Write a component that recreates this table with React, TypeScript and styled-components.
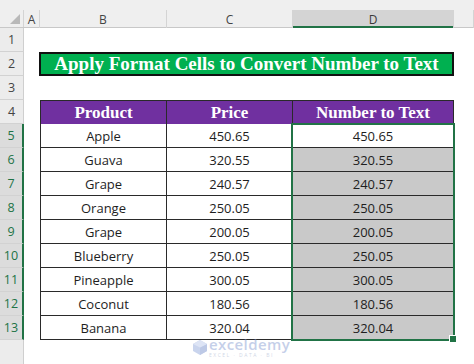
import { Fragment } from "react";
import styled, { createGlobalStyle } from "styled-components";

const GlobalStyle = createGlobalStyle`
  html, body {
    margin: 0;
    padding: 0;
    background: #ffffff;
  }
  body {
    width: 474px;
    height: 364px;
    overflow: hidden;
  }
`;

const SELECT_GREEN = "#217346";
const COLS = "16px 127px 126px 161px 1fr";

const Page = styled.div`
  position: relative;
  width: 474px;
  height: 364px;
  display: flex;
  flex-direction: column;
  font-family: "Open Sans", "Liberation Sans", sans-serif;
  overflow: hidden;
`;

const ColumnBar = styled.div`
  display: grid;
  grid-template-columns: 24px ${COLS};
  height: 28px;
  padding-top: 10px;
  box-sizing: border-box;
  background: #efefef;
  border-bottom: 1px solid #c8c8c8;
`;

const Corner = styled.div`
  position: relative;
  border-right: 1px solid #d4d4d4;
  &:after {
    content: "";
    position: absolute;
    right: 3px;
    bottom: 3px;
    border-style: solid;
    border-width: 0 0 10px 10px;
    border-color: transparent transparent #b9b9b9 transparent;
  }
`;

const ColHead = styled.div<{ $selected?: boolean }>`
  display: flex;
  align-items: center;
  justify-content: center;
  font-size: 12px;
  color: ${({ $selected }) => ($selected ? "#3a3a3a" : "#444")};
  background: ${({ $selected }) => ($selected ? "#d4d4d4" : "transparent")};
  border-right: 1px solid #d4d4d4;
  box-shadow: ${({ $selected }) =>
    $selected ? `inset 0 -2px 0 ${SELECT_GREEN}` : "none"};
  margin-bottom: -1px;
`;

const Body = styled.div`
  display: flex;
  flex: 1;
`;

const RowHeads = styled.div`
  width: 24px;
  display: flex;
  flex-direction: column;
  flex-shrink: 0;
`;

const RowHead = styled.div<{ $selected?: boolean }>`
  height: 24px;
  box-sizing: border-box;
  display: flex;
  align-items: center;
  justify-content: center;
  font-size: 12.5px;
  color: ${({ $selected }) => ($selected ? SELECT_GREEN : "#444")};
  background: ${({ $selected }) => ($selected ? "#dcdcdc" : "#ececec")};
  border-bottom: 1px solid #d2d2d2;
  border-right: ${({ $selected }) =>
    $selected ? `2px solid ${SELECT_GREEN}` : "1px solid #cfcfcf"};
`;

const RowFill = styled.div`
  flex: 1;
  background: #ececec;
  border-right: 1px solid #cfcfcf;
`;

const Sheet = styled.div`
  flex: 1;
  display: grid;
  grid-template-columns: ${COLS};
  grid-template-rows: repeat(14, 24px);
  align-content: start;
`;

const Title = styled.div`
  grid-row: 2;
  grid-column: 2 / 5;
  display: flex;
  align-items: center;
  justify-content: center;
  background: #00b050;
  border: 2px solid #111;
  color: #ffffff;
  font-family: "Liberation Serif", "Times New Roman", serif;
  font-weight: bold;
  font-size: 19px;
  box-sizing: border-box;
  margin-left: -1px;
`;

const HeadCell = styled.div<{ $col: number }>`
  grid-row: 4;
  grid-column: ${({ $col }) => $col};
  display: flex;
  align-items: center;
  justify-content: center;
  background: #7030a0;
  color: #ffffff;
  font-family: "Liberation Serif", "Times New Roman", serif;
  font-weight: bold;
  font-size: 17px;
  border-top: 1px solid #2a2a2a;
  border-right: 1px solid #2a2a2a;
  border-left: ${({ $col }) => ($col === 2 ? "1px solid #2a2a2a" : "none")};
  border-bottom: 1px solid #2a2a2a;
  margin-bottom: -1px;
`;

const DataCell = styled.div<{ $row: number; $col: number; $shaded?: boolean }>`
  grid-row: ${({ $row }) => $row};
  grid-column: ${({ $col }) => $col};
  display: flex;
  align-items: center;
  justify-content: center;
  font-size: 13px;
  color: #1e1e1e;
  background: ${({ $shaded }) => ($shaded ? "#c9c9c9" : "#ffffff")};
  border-right: 1px solid #2a2a2a;
  border-left: ${({ $col }) => ($col === 2 ? "1px solid #2a2a2a" : "none")};
  border-bottom: 1px solid #2a2a2a;
  box-sizing: border-box;
`;

const Selection = styled.div`
  grid-row: 5 / 14;
  grid-column: 4;
  position: relative;
  border: 2px solid ${SELECT_GREEN};
  margin: -1px -1px -1px -2px;
  pointer-events: none;
  &:after {
    content: "";
    position: absolute;
    right: -4px;
    bottom: -4px;
    width: 6px;
    height: 6px;
    background: ${SELECT_GREEN};
    border: 1px solid #ffffff;
  }
`;

const Watermark = styled.div`
  position: absolute;
  left: 193px;
  top: 336px;
  display: flex;
  align-items: center;
  gap: 2px;
  opacity: 0.45;
  pointer-events: none;
`;

const MarkText = styled.div`
  display: flex;
  flex-direction: column;
`;

const MarkName = styled.span`
  font-family: "Open Sans", sans-serif;
  font-weight: 600;
  font-size: 15px;
  line-height: 16px;
  color: #7f97cf;
  letter-spacing: 0.4px;
`;

const MarkSub = styled.span`
  font-family: "Open Sans", sans-serif;
  font-size: 5px;
  line-height: 6px;
  color: #9aa8c8;
  letter-spacing: 1.5px;
`;

const rows: [string, string][] = [
  ["Apple", "450.65"],
  ["Guava", "320.55"],
  ["Grape", "240.57"],
  ["Orange", "250.05"],
  ["Grape", "200.05"],
  ["Blueberry", "250.05"],
  ["Pineapple", "300.05"],
  ["Coconut", "180.56"],
  ["Banana", "320.04"],
];

export default function App() {
  return (
    <Page>
      <GlobalStyle />
      <ColumnBar>
        <Corner />
        <ColHead>A</ColHead>
        <ColHead>B</ColHead>
        <ColHead>C</ColHead>
        <ColHead $selected>D</ColHead>
        <ColHead />
      </ColumnBar>
      <Body>
        <RowHeads>
          {Array.from({ length: 13 }, (_, i) => (
            <RowHead key={i} $selected={i >= 4}>
              {i + 1}
            </RowHead>
          ))}
          <RowFill />
        </RowHeads>
        <Sheet>
          <Title>Apply Format Cells to Convert Number to Text</Title>
          <HeadCell $col={2}>Product</HeadCell>
          <HeadCell $col={3}>Price</HeadCell>
          <HeadCell $col={4}>Number to Text</HeadCell>
          {rows.map(([name, price], i) => (
            <Fragment key={i}>
              <DataCell $row={i + 5} $col={2}>
                {name}
              </DataCell>
              <DataCell $row={i + 5} $col={3}>
                {price}
              </DataCell>
              <DataCell $row={i + 5} $col={4} $shaded={i > 0}>
                {price}
              </DataCell>
            </Fragment>
          ))}
          <Selection />
        </Sheet>
      </Body>
      <Watermark>
        <svg width="14" height="15" viewBox="0 0 14 15">
          <polygon points="7,0 14,4 14,11 7,15 0,11 0,4" fill="#8aa2d8" />
          <polygon points="7,7.5 14,4 14,11 7,15" fill="#6f88c8" />
          <polygon points="7,0 14,4 7,7.5 0,4" fill="#b4c4ea" />
        </svg>
        <MarkText>
          <MarkName>exceldemy</MarkName>
          <MarkSub>EXCEL · DATA · BI</MarkSub>
        </MarkText>
      </Watermark>
    </Page>
  );
}
